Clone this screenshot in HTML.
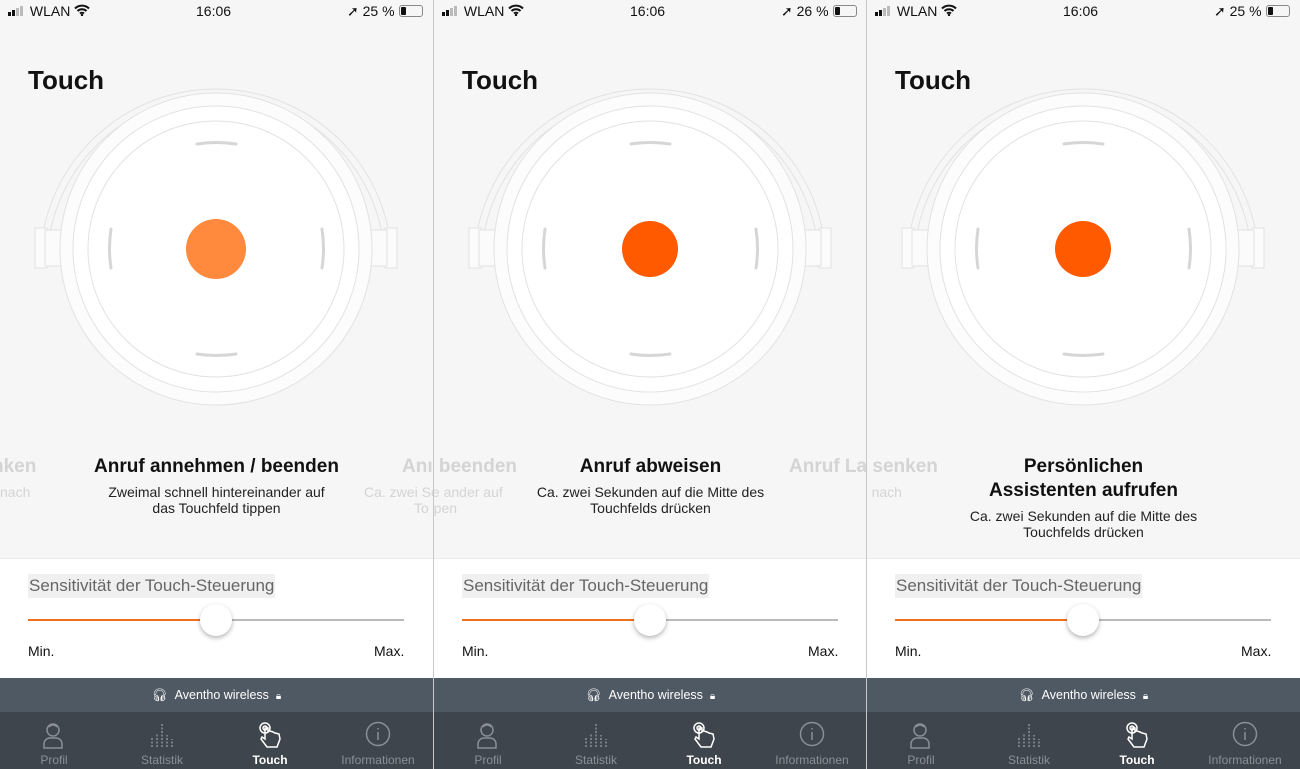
<!DOCTYPE html>
<html><head><meta charset="utf-8"><style>
*{margin:0;padding:0;box-sizing:border-box}
body{width:1300px;height:769px;overflow:hidden;background:#fff;font-family:"Liberation Sans",Arial,sans-serif;position:relative}
.p{position:absolute;top:0;width:433px;height:769px;overflow:hidden;background:#f6f6f6}
.sep{position:absolute;top:0;width:1px;height:769px;background:#c8c8c8;z-index:5}
.sb{position:absolute;top:0;left:0;right:0;height:24px;font-size:14px;color:#111}
.t{position:absolute;left:28px;top:65px;font-size:26px;font-weight:bold;color:#111}
.ill{position:absolute;left:0;top:80px}
.main{position:absolute;left:0;width:433px;text-align:center;font-size:19px;font-weight:bold;color:#111;line-height:24px}
.sub{position:absolute;left:0;width:433px;text-align:center;font-size:14px;color:#222;line-height:16px}
.fade{position:absolute;color:#d4d4d4;white-space:nowrap}
.white{position:absolute;left:0;top:558px;width:433px;height:120px;background:#fff;border-top:1px solid #eaeaea}
.lbl{position:absolute;left:28px;top:574px;font-size:17px;color:#666;background:#f0f0f0;padding:0 1px;line-height:24px}
.tr{position:absolute;top:619px;height:2px}
.th{position:absolute;left:200px;top:604px;width:32px;height:32px;border-radius:50%;background:#fff;box-shadow:0 2px 5px rgba(0,0,0,.3)}
.mm{position:absolute;top:643px;font-size:14px;color:#111}
.dev{position:absolute;left:0;top:678px;width:433px;height:34px;background:#4f5963;color:#fff;font-size:12.5px;text-align:center;line-height:34px}
.tab{position:absolute;left:0;top:712px;width:433px;height:57px;background:#3e454c}
.tl{position:absolute;top:41px;font-size:12px;color:#8a9097;text-align:center;width:108px}
.ti{position:absolute;top:9px}
</style></head><body>

<div class="sep" style="left:433px"></div>
<div class="sep" style="left:866px"></div>

<div class="p" style="left:0">
 <div class="sb"><span style="position:absolute;left:8px;top:3px">
  <svg width="18" height="10" style="vertical-align:0"><rect x="0" y="6" width="3" height="4" fill="#111"/><rect x="4" y="4" width="3" height="6" fill="#111"/><rect x="8" y="2" width="3" height="8" fill="#bbb"/><rect x="12" y="0" width="3" height="10" fill="#bbb"/></svg> WLAN
  <svg width="16" height="12" viewBox="0 0 16 12"><path d="M1 4.5a10 10 0 0 1 14 0M3.5 7a6.5 6.5 0 0 1 9 0M6 9.5a3 3 0 0 1 4 0" stroke="#111" stroke-width="2" fill="none"/><circle cx="8" cy="11" r="1.2" fill="#111"/></svg></span>
  <span style="position:absolute;left:196px;top:3px">16:06</span>
  <span style="position:absolute;left:347px;top:3px">➚ 25 %</span>
  <span style="position:absolute;left:399px;top:5px;width:24px;height:12px;border:1px solid #888;border-radius:3px"><span style="position:absolute;left:1px;top:1px;width:5px;height:8px;background:#111;border-radius:1px"></span></span>
 </div>
 <div class="t">Touch</div>
 <svg class="ill" width="433" height="330" viewBox="0 80 433 330">
  <g fill="none" stroke="#e2e2e2" stroke-width="1">
   <path d="M40 265 A176 176 0 0 1 392 265"/>
   <path d="M47 265 A169 169 0 0 1 385 265"/>
   <rect x="35" y="228" width="12" height="40" fill="#fbfbfb"/><rect x="385" y="228" width="12" height="40" fill="#fbfbfb"/>
   <rect x="45" y="230" width="16" height="36" fill="#fbfbfb"/><rect x="371" y="230" width="16" height="36" fill="#fbfbfb"/>
   <circle cx="216" cy="249" r="156" fill="#fcfcfc"/>
   <circle cx="216" cy="249" r="143" fill="#fff"/>
   <circle cx="216" cy="249" r="128" fill="#fff"/>
  </g>
  <g stroke="#d6d6d6" stroke-width="3" fill="none" stroke-linecap="round">
   <path d="M197 144 Q216 141 236 144"/><path d="M197 354 Q216 357 236 354"/>
   <path d="M111 229 Q108 249 111 268"/><path d="M322 229 Q325 249 322 268"/>
  </g>
  <circle cx="216" cy="249" r="30" fill="#ff8a3d"/>
 </svg>
 <div class="fade" style="left:-8px;top:456px;font-size:19px;font-weight:bold">nken</div>
 <div class="fade" style="left:0;top:484px;font-size:14px">nach</div>
 <div class="fade" style="left:402px;top:456px;font-size:19px;font-weight:bold">Anı</div>
 <div class="fade" style="left:364px;top:484px;font-size:14px">Ca. zwei Se</div>
 <div class="fade" style="left:414px;top:500px;font-size:14px">To</div>
 <div class="main" style="top:455px">Anruf annehmen / beenden</div>
 <div class="sub" style="top:484px">Zweimal schnell hintereinander auf<br>das Touchfeld tippen</div>
 <div class="white"></div>
 <div class="lbl">Sensitivität der Touch-Steuerung</div>
 <div class="tr" style="left:28px;width:188px;background:#f07020"></div>
 <div class="tr" style="left:216px;width:188px;background:#bbb"></div>
 <div class="th"></div>
 <div class="mm" style="left:28px">Min.</div><div class="mm" style="left:374px">Max.</div>
 <div class="dev">🎧︎ &nbsp;Aventho wireless &nbsp;<span style="font-size:10px">🔒︎</span></div>
 <div class="tab">
  <svg class="ti" style="left:42px" width="22" height="28" viewBox="0 0 22 28" fill="none" stroke="#8a9097" stroke-width="1.5"><circle cx="11" cy="9" r="6"/><path d="M7 6a5 5 0 0 1 8 0"/><path d="M2 27v-4a6 6 0 0 1 6-6h6a6 6 0 0 1 6 6v4z"/></svg>
  <svg class="ti" style="left:150px" width="26" height="26" viewBox="0 0 26 26" stroke="#8a9097" stroke-width="1.5" stroke-dasharray="2 1.5"><path d="M2 26v-10M7 26v-14M12 26v-24M17 26v-12M22 26v-8"/></svg>
  <svg class="ti" style="left:258px" width="26" height="28" viewBox="0 0 26 28" fill="none" stroke="#fff" stroke-width="1.5"><circle cx="7" cy="7" r="5"/><circle cx="7" cy="7" r="2"/><path d="M7 7l0 11-3-2-1 2 6 8h10l3-8-1-5-4-1-2-1-3-1-2 0V7z"/></svg>
  <svg class="ti" style="left:365px" width="26" height="26" viewBox="0 0 26 26" fill="none" stroke="#8a9097" stroke-width="1.5"><circle cx="13" cy="13" r="11.5"/><path d="M13 11v8M13 7v1.5"/></svg>
  <div class="tl" style="left:0">Profil</div>
  <div class="tl" style="left:108px">Statistik</div>
  <div class="tl" style="left:216px;color:#fff;font-weight:bold">Touch</div>
  <div class="tl" style="left:324px">Informationen</div>
 </div>
</div>

<div class="p" style="left:434px">
 <div class="sb"><span style="position:absolute;left:8px;top:3px">
  <svg width="18" height="10"><rect x="0" y="6" width="3" height="4" fill="#111"/><rect x="4" y="4" width="3" height="6" fill="#111"/><rect x="8" y="2" width="3" height="8" fill="#bbb"/><rect x="12" y="0" width="3" height="10" fill="#bbb"/></svg> WLAN
  <svg width="16" height="12" viewBox="0 0 16 12"><path d="M1 4.5a10 10 0 0 1 14 0M3.5 7a6.5 6.5 0 0 1 9 0M6 9.5a3 3 0 0 1 4 0" stroke="#111" stroke-width="2" fill="none"/><circle cx="8" cy="11" r="1.2" fill="#111"/></svg></span>
  <span style="position:absolute;left:196px;top:3px">16:06</span>
  <span style="position:absolute;left:347px;top:3px">➚ 26 %</span>
  <span style="position:absolute;left:399px;top:5px;width:24px;height:12px;border:1px solid #888;border-radius:3px"><span style="position:absolute;left:1px;top:1px;width:5px;height:8px;background:#111;border-radius:1px"></span></span>
 </div>
 <div class="t">Touch</div>
 <svg class="ill" width="433" height="330" viewBox="0 80 433 330">
  <g fill="none" stroke="#e2e2e2" stroke-width="1">
   <path d="M40 265 A176 176 0 0 1 392 265"/><path d="M47 265 A169 169 0 0 1 385 265"/>
   <rect x="35" y="228" width="12" height="40" fill="#fbfbfb"/><rect x="385" y="228" width="12" height="40" fill="#fbfbfb"/>
   <rect x="45" y="230" width="16" height="36" fill="#fbfbfb"/><rect x="371" y="230" width="16" height="36" fill="#fbfbfb"/>
   <circle cx="216" cy="249" r="156" fill="#fcfcfc"/><circle cx="216" cy="249" r="143" fill="#fff"/><circle cx="216" cy="249" r="128" fill="#fff"/>
  </g>
  <g stroke="#d6d6d6" stroke-width="3" fill="none" stroke-linecap="round">
   <path d="M197 144 Q216 141 236 144"/><path d="M197 354 Q216 357 236 354"/>
   <path d="M111 229 Q108 249 111 268"/><path d="M322 229 Q325 249 322 268"/>
  </g>
  <circle cx="216" cy="249" r="28" fill="#ff5a00"/>
 </svg>
 <div class="fade" style="left:-31px;top:456px;font-size:19px;font-weight:bold">Anı beenden</div>
 <div class="fade" style="left:-69px;top:484px;font-size:14px">Ca. zwei Se ander auf</div>
 <div class="fade" style="left:-19px;top:500px;font-size:14px">To pen</div>
 <div class="fade" style="left:355px;top:456px;font-size:19px;font-weight:bold">Anruf La</div>
 <div class="main" style="top:455px">Anruf abweisen</div>
 <div class="sub" style="top:484px">Ca. zwei Sekunden auf die Mitte des<br>Touchfelds drücken</div>
 <div class="white"></div>
 <div class="lbl">Sensitivität der Touch-Steuerung</div>
 <div class="tr" style="left:28px;width:188px;background:#f07020"></div>
 <div class="tr" style="left:216px;width:188px;background:#bbb"></div>
 <div class="th"></div>
 <div class="mm" style="left:28px">Min.</div><div class="mm" style="left:374px">Max.</div>
 <div class="dev">🎧︎ &nbsp;Aventho wireless &nbsp;<span style="font-size:10px">🔒︎</span></div>
 <div class="tab">
  <svg class="ti" style="left:42px" width="22" height="28" viewBox="0 0 22 28" fill="none" stroke="#8a9097" stroke-width="1.5"><circle cx="11" cy="9" r="6"/><path d="M7 6a5 5 0 0 1 8 0"/><path d="M2 27v-4a6 6 0 0 1 6-6h6a6 6 0 0 1 6 6v4z"/></svg>
  <svg class="ti" style="left:150px" width="26" height="26" viewBox="0 0 26 26" stroke="#8a9097" stroke-width="1.5" stroke-dasharray="2 1.5"><path d="M2 26v-10M7 26v-14M12 26v-24M17 26v-12M22 26v-8"/></svg>
  <svg class="ti" style="left:258px" width="26" height="28" viewBox="0 0 26 28" fill="none" stroke="#fff" stroke-width="1.5"><circle cx="7" cy="7" r="5"/><circle cx="7" cy="7" r="2"/><path d="M7 7l0 11-3-2-1 2 6 8h10l3-8-1-5-4-1-2-1-3-1-2 0V7z"/></svg>
  <svg class="ti" style="left:365px" width="26" height="26" viewBox="0 0 26 26" fill="none" stroke="#8a9097" stroke-width="1.5"><circle cx="13" cy="13" r="11.5"/><path d="M13 11v8M13 7v1.5"/></svg>
  <div class="tl" style="left:0">Profil</div>
  <div class="tl" style="left:108px">Statistik</div>
  <div class="tl" style="left:216px;color:#fff;font-weight:bold">Touch</div>
  <div class="tl" style="left:324px">Informationen</div>
 </div>
</div>

<div class="p" style="left:867px">
 <div class="sb"><span style="position:absolute;left:8px;top:3px">
  <svg width="18" height="10"><rect x="0" y="6" width="3" height="4" fill="#111"/><rect x="4" y="4" width="3" height="6" fill="#111"/><rect x="8" y="2" width="3" height="8" fill="#bbb"/><rect x="12" y="0" width="3" height="10" fill="#bbb"/></svg> WLAN
  <svg width="16" height="12" viewBox="0 0 16 12"><path d="M1 4.5a10 10 0 0 1 14 0M3.5 7a6.5 6.5 0 0 1 9 0M6 9.5a3 3 0 0 1 4 0" stroke="#111" stroke-width="2" fill="none"/><circle cx="8" cy="11" r="1.2" fill="#111"/></svg></span>
  <span style="position:absolute;left:196px;top:3px">16:06</span>
  <span style="position:absolute;left:347px;top:3px">➚ 25 %</span>
  <span style="position:absolute;left:399px;top:5px;width:24px;height:12px;border:1px solid #888;border-radius:3px"><span style="position:absolute;left:1px;top:1px;width:5px;height:8px;background:#111;border-radius:1px"></span></span>
 </div>
 <div class="t">Touch</div>
 <svg class="ill" width="433" height="330" viewBox="0 80 433 330">
  <g fill="none" stroke="#e2e2e2" stroke-width="1">
   <path d="M40 265 A176 176 0 0 1 392 265"/><path d="M47 265 A169 169 0 0 1 385 265"/>
   <rect x="35" y="228" width="12" height="40" fill="#fbfbfb"/><rect x="385" y="228" width="12" height="40" fill="#fbfbfb"/>
   <rect x="45" y="230" width="16" height="36" fill="#fbfbfb"/><rect x="371" y="230" width="16" height="36" fill="#fbfbfb"/>
   <circle cx="216" cy="249" r="156" fill="#fcfcfc"/><circle cx="216" cy="249" r="143" fill="#fff"/><circle cx="216" cy="249" r="128" fill="#fff"/>
  </g>
  <g stroke="#d6d6d6" stroke-width="3" fill="none" stroke-linecap="round">
   <path d="M197 144 Q216 141 236 144"/><path d="M197 354 Q216 357 236 354"/>
   <path d="M111 229 Q108 249 111 268"/><path d="M322 229 Q325 249 322 268"/>
  </g>
  <circle cx="216" cy="249" r="28" fill="#ff5a00"/>
 </svg>
 <div class="fade" style="left:-78px;top:456px;font-size:19px;font-weight:bold">Anruf La senken</div>
 <div class="fade" style="left:-32px;top:484px;font-size:14px">Auf d nach</div>
 <div class="main" style="top:455px">Persönlichen<br>Assistenten aufrufen</div>
 <div class="sub" style="top:508px">Ca. zwei Sekunden auf die Mitte des<br>Touchfelds drücken</div>
 <div class="white"></div>
 <div class="lbl">Sensitivität der Touch-Steuerung</div>
 <div class="tr" style="left:28px;width:188px;background:#f07020"></div>
 <div class="tr" style="left:216px;width:188px;background:#bbb"></div>
 <div class="th"></div>
 <div class="mm" style="left:28px">Min.</div><div class="mm" style="left:374px">Max.</div>
 <div class="dev">🎧︎ &nbsp;Aventho wireless &nbsp;<span style="font-size:10px">🔒︎</span></div>
 <div class="tab">
  <svg class="ti" style="left:42px" width="22" height="28" viewBox="0 0 22 28" fill="none" stroke="#8a9097" stroke-width="1.5"><circle cx="11" cy="9" r="6"/><path d="M7 6a5 5 0 0 1 8 0"/><path d="M2 27v-4a6 6 0 0 1 6-6h6a6 6 0 0 1 6 6v4z"/></svg>
  <svg class="ti" style="left:150px" width="26" height="26" viewBox="0 0 26 26" stroke="#8a9097" stroke-width="1.5" stroke-dasharray="2 1.5"><path d="M2 26v-10M7 26v-14M12 26v-24M17 26v-12M22 26v-8"/></svg>
  <svg class="ti" style="left:258px" width="26" height="28" viewBox="0 0 26 28" fill="none" stroke="#fff" stroke-width="1.5"><circle cx="7" cy="7" r="5"/><circle cx="7" cy="7" r="2"/><path d="M7 7l0 11-3-2-1 2 6 8h10l3-8-1-5-4-1-2-1-3-1-2 0V7z"/></svg>
  <svg class="ti" style="left:365px" width="26" height="26" viewBox="0 0 26 26" fill="none" stroke="#8a9097" stroke-width="1.5"><circle cx="13" cy="13" r="11.5"/><path d="M13 11v8M13 7v1.5"/></svg>
  <div class="tl" style="left:0">Profil</div>
  <div class="tl" style="left:108px">Statistik</div>
  <div class="tl" style="left:216px;color:#fff;font-weight:bold">Touch</div>
  <div class="tl" style="left:324px">Informationen</div>
 </div>
</div>
</body></html>
